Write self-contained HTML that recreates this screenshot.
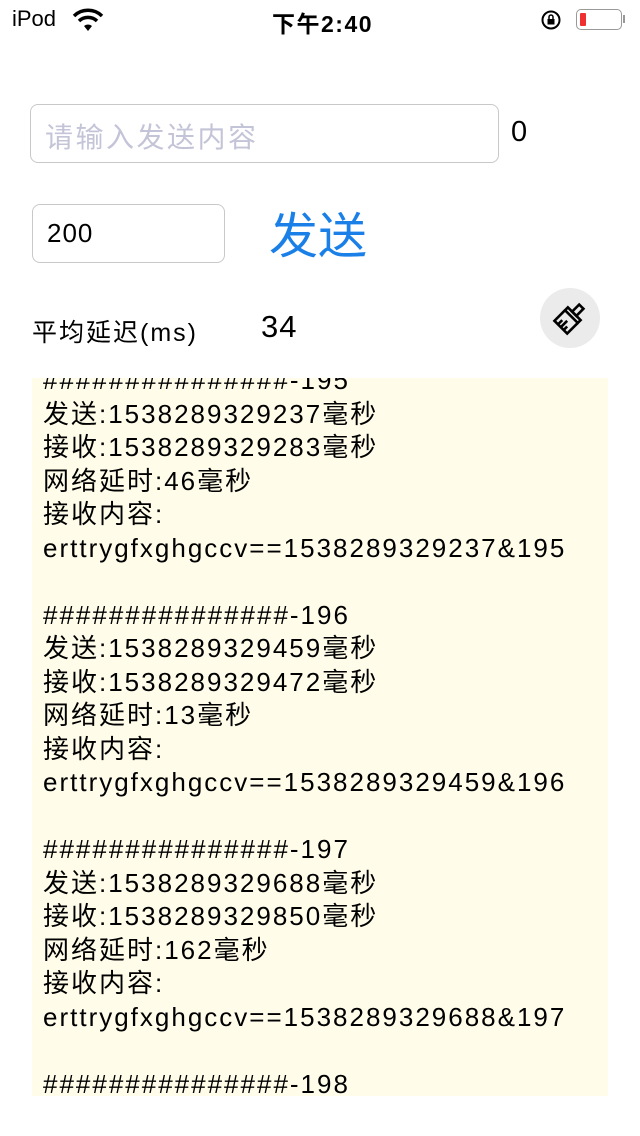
<!DOCTYPE html>
<html><head><meta charset="utf-8"><style>
body{margin:0;width:640px;height:1136px;background:#fff;position:relative;overflow:hidden;font-family:"Liberation Sans","Noto Sans CJK SC",sans-serif;color:#000}
.a{position:absolute}
</style></head><body>
<div class="a" style="left:12px;top:6px;font-size:22px">iPod</div>
<svg class="a" style="left:72px;top:8px" width="32" height="24" viewBox="0 0 32 24"><path d="M2 8 A20 20 0 0 1 30 8" stroke="#000" stroke-width="3.5" fill="none"/><path d="M7 13 A13 13 0 0 1 25 13" stroke="#000" stroke-width="3.5" fill="none"/><path d="M12 18 L16 23 L20 18 A6 6 0 0 0 12 18Z" fill="#000"/></svg>
<div class="a" style="left:272px;top:5px;font-size:23px;font-weight:bold;letter-spacing:1.5px">下午2:40</div>
<svg class="a" style="left:540px;top:9px" width="24" height="22" viewBox="0 0 24 22"><circle cx="11" cy="11" r="8.5" stroke="#000" stroke-width="2" fill="none"/><rect x="7.5" y="10" width="7" height="5.5" fill="#000"/><path d="M9 10 V8 a2 2 0 0 1 4 0 V10" stroke="#000" stroke-width="1.5" fill="none"/></svg>
<div class="a" style="left:576px;top:9px;width:46px;height:21px;border:1.5px solid #999;border-radius:5px;box-sizing:border-box"></div>
<div class="a" style="left:580px;top:13px;width:6px;height:13px;background:#f03030;border-radius:1px"></div>
<div class="a" style="left:623px;top:15px;width:2px;height:8px;background:#999"></div>

<div class="a" style="left:30px;top:104px;width:469px;height:59px;border:1px solid #c8c8c8;border-radius:8px;box-sizing:border-box"></div>
<div class="a" style="left:45px;top:116px;font-size:28px;color:#c4c4d8;letter-spacing:2.5px">请输入发送内容</div>
<div class="a" style="left:511px;top:116px;font-size:29px">0</div>

<div class="a" style="left:32px;top:204px;width:193px;height:59px;border:1px solid #c8c8c8;border-radius:8px;box-sizing:border-box"></div>
<div class="a" style="left:47px;top:218px;font-size:26px;letter-spacing:1px">200</div>
<div class="a" style="left:269px;top:197px;font-size:49px;color:#1a80e8">发送</div>

<div class="a" style="left:32px;top:313px;font-size:25px;letter-spacing:2px">平均延迟(ms)</div>
<div class="a" style="left:261px;top:309px;font-size:31px;letter-spacing:1px">34</div>
<div class="a" style="left:540px;top:288px;width:60px;height:60px;border-radius:50%;background:#ebebeb"></div>
<svg class="a" style="left:550px;top:298px" width="40" height="40" viewBox="0 0 40 40"><g transform="rotate(45 20 20)" stroke="#000" stroke-width="2.6" fill="none"><rect x="17" y="4" width="6" height="10"/><rect x="11" y="14" width="18" height="4"/><path d="M11 18 V33 H29 V18"/><path d="M16 33 V27 M20 33 V24 M24 33 V28"/></g></svg>

<div class="a" style="left:32px;top:378px;width:576px;height:718px;background:#fffdea;overflow:hidden">
<div style="position:absolute;left:11px;top:-14px;font-size:26px;letter-spacing:2px;line-height:33.5px;white-space:pre">###############-195
发送:1538289329237毫秒
接收:1538289329283毫秒
网络延时:46毫秒
接收内容:
erttrygfxghgccv==1538289329237&amp;195

###############-196
发送:1538289329459毫秒
接收:1538289329472毫秒
网络延时:13毫秒
接收内容:
erttrygfxghgccv==1538289329459&amp;196

###############-197
发送:1538289329688毫秒
接收:1538289329850毫秒
网络延时:162毫秒
接收内容:
erttrygfxghgccv==1538289329688&amp;197

###############-198
</div></div>
</body></html>
